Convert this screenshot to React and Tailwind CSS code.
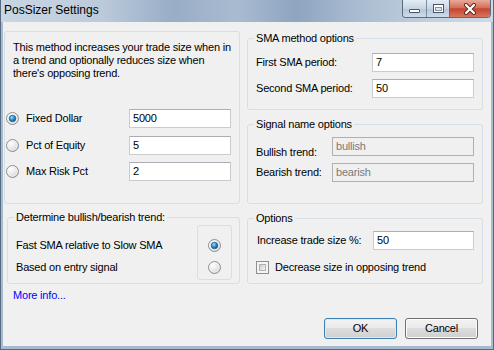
import React, { useId } from "react";

function Radio({ checked }) {
  const id = useId().replace(/:/g, "");
  return (
    <svg width="13" height="13" viewBox="0 0 13 13" className="shrink-0 block">
      <defs>
        <radialGradient id={`b${id}`} cx="0.35" cy="0.3" r="0.8">
          <stop offset="0" stopColor="#ffffff" />
          <stop offset="0.6" stopColor="#e6e6e6" />
          <stop offset="1" stopColor="#c4c4c4" />
        </radialGradient>
        <radialGradient id={`d${id}`} cx="0.4" cy="0.35" r="0.7">
          <stop offset="0" stopColor="#9fe0ff" />
          <stop offset="0.5" stopColor="#2a8fd0" />
          <stop offset="1" stopColor="#0b4f86" />
        </radialGradient>
      </defs>
      <circle cx="6.5" cy="6.5" r="6" fill={`url(#b${id})`} stroke="#8d8f93" strokeWidth="1" />
      <circle cx="6.5" cy="6.5" r="4.6" fill="none" stroke="#f4f4f4" strokeWidth="0.8" />
      {checked && <circle cx="6.5" cy="6.5" r="3.3" fill={`url(#d${id})`} stroke="#24507a" strokeWidth="0.6" />}
    </svg>
  );
}

function Check() {
  return (
    <div className="w-[13px] h-[13px] shrink-0 border border-[#8f8f8f] bg-[#f4f4f4] p-[2px]">
      <div className="w-full h-full border border-[#aeb1b6] bg-[linear-gradient(135deg,#cbcfd5,#f2f3f5)]"></div>
    </div>
  );
}

function Input({ value, w, disabled }) {
  return (
    <div
      className={
        "h-[19px] shrink-0 border pl-[3px] leading-[17px] " +
        (disabled
          ? "bg-[#f0f0f0] border-[#b0b0b0] text-[#7a7a7a]"
          : "bg-white border-[#c8cbd0] border-t-[#aaadb3] text-black")
      }
      style={{ width: w }}
    >
      {value}
    </div>
  );
}

function Group({ title, className, legendClass, children }) {
  return (
    <fieldset className={"border border-[#d5dfe5] rounded-[3px] shrink-0 " + className}>
      <legend className={"px-[2px] leading-[13px] " + legendClass}>{title}</legend>
      {children}
    </fieldset>
  );
}

export default function App() {
  return (
    <div className="w-[494px] h-[350px] flex flex-col overflow-hidden bg-[#a6bad0] border-x border-b border-[#56697f] font-['Liberation_Sans',Arial,sans-serif] text-[11px] text-black tracking-[-0.2px]">
      {/* title bar */}
      <div className="h-[22px] shrink-0 flex items-start bg-[linear-gradient(90deg,#c9d6e4_0%,#bccbdc_20%,#98adc6_35%,#a9bbd0_48%,#8ea5c0_60%,#a8bbd0_72%,#c3d1e0_88%,#cdd9e6_100%)]">
        <span className="ml-[3px] mt-[3px] text-[12px] leading-[15px] tracking-normal text-black">PosSizer Settings</span>
        <div className="ml-auto mr-[2px] flex h-[18px] border border-t-0 border-[#5b6b7e] rounded-b-[4px] overflow-hidden">
          <div className="w-[24px] flex items-end justify-center pb-[4px] bg-[linear-gradient(180deg,#e4ecf4,#c7d5e4_50%,#b3c5d8_51%,#cfdbe8)] border-r border-[#7d8da0]">
            <div className="w-[11px] h-[4px] bg-white border border-[#4a5563] rounded-[1px]"></div>
          </div>
          <div className="w-[23px] flex items-center justify-center bg-[linear-gradient(180deg,#e4ecf4,#c7d5e4_50%,#b3c5d8_51%,#cfdbe8)] border-r border-[#5b6b7e]">
            <div className="w-[11px] h-[9px] border border-[#4a5563] bg-white p-[1px] pt-[2px]">
              <div className="w-full h-full border border-[#8593a3] bg-[#dfe6ee]"></div>
            </div>
          </div>
          <div className="w-[40px] flex items-center justify-center bg-[linear-gradient(180deg,#e9a99b,#d66f5c_45%,#c4452f_52%,#d8765f)]">
            <svg width="14" height="12" viewBox="0 0 14 12">
              <path d="M3 2 L11 10 M11 2 L3 10" stroke="#5a2a22" strokeWidth="4" strokeLinecap="round" />
              <path d="M3 2 L11 10 M11 2 L3 10" stroke="#ffffff" strokeWidth="2.2" strokeLinecap="round" />
            </svg>
          </div>
        </div>
      </div>

      {/* client */}
      <div className="ml-[2px] mr-[2px] h-[324px] bg-[#f0f0f0] flex flex-col">
        {/* row 1 */}
        <div className="flex items-start">
          <div className="ml-[1px] mt-[9px] w-[236px] h-[173px] border border-[#d5dfe5] rounded-[3px] flex flex-col">
            <p className="pl-[8px] pt-[9px] leading-[13px] w-[226px]">
              This method increases your trade size when in a trend and optionally reduces size when there's opposing trend.
            </p>
            <div className="mt-[29px] flex items-center h-[19px]">
              <div className="ml-[1px]"><Radio checked /></div>
              <span className="ml-[7px]">Fixed Dollar</span>
              <div className="ml-auto mr-[8px]"><Input value="5000" w={102} /></div>
            </div>
            <div className="mt-[8px] flex items-center h-[19px]">
              <div className="ml-[1px]"><Radio /></div>
              <span className="ml-[7px]">Pct of Equity</span>
              <div className="ml-auto mr-[8px]"><Input value="5" w={102} /></div>
            </div>
            <div className="mt-[7px] flex items-center h-[19px]">
              <div className="ml-[1px]"><Radio /></div>
              <span className="ml-[7px]">Max Risk Pct</span>
              <div className="ml-auto mr-[8px]"><Input value="2" w={102} /></div>
            </div>
          </div>

          <div className="ml-[7px] mt-[10px] flex flex-col">
            <Group title="SMA method options" legendClass="-ml-[2px]" className="w-[236px] h-[78px] pl-[8px] pr-[8px] pt-[8px]">
              <div className="flex items-center justify-between h-[19px]">
                <span>First SMA period:</span>
                <Input value="7" w={102} />
              </div>
              <div className="mt-[7px] flex items-center justify-between h-[19px]">
                <span>Second SMA period:</span>
                <Input value="50" w={102} />
              </div>
            </Group>
            <Group title="Signal name options" legendClass="-ml-[2px]" className="mt-[8px] w-[236px] h-[86px] pl-[8px] pr-[8px] pt-[6px]">
              <div className="flex items-start justify-between h-[19px]">
                <span className="mt-[9px] leading-[13px]">Bullish trend:</span>
                <Input value="bullish" w={142} disabled />
              </div>
              <div className="mt-[7px] flex items-center justify-between h-[19px]">
                <span>Bearish trend:</span>
                <Input value="bearish" w={142} disabled />
              </div>
            </Group>
          </div>
        </div>

        {/* row 2 */}
        <div className="flex items-start">
          <Group title="Determine bullish/bearish trend:" legendClass="-ml-[2px]" className="ml-[4px] mt-[7px] w-[233px] h-[73px] pl-[8px] pr-[7px] flex">
            <div className="flex w-full">
              <div className="flex-1 pt-[15px] flex flex-col gap-[9px] leading-[13px]">
                <span>Fast SMA relative to Slow SMA</span>
                <span>Based on entry signal</span>
              </div>
              <div className="mt-[1px] w-[35px] h-[55px] border border-[#d5dfe5] rounded-[3px] flex flex-col items-center pt-[13px] gap-[9px]">
                <Radio checked />
                <Radio />
              </div>
            </div>
          </Group>
          <Group title="Options" legendClass="-ml-[2px]" className="ml-[7px] mt-[8px] w-[236px] h-[72px] pl-[8px] pr-[8px] pt-[6px]">
            <div className="flex items-center justify-between h-[19px] pl-[1px]">
              <span>Increase trade size %:</span>
              <Input value="50" w={101} />
            </div>
            <div className="mt-[11px] flex items-center">
              <Check />
              <span className="ml-[6px] leading-[13px]">Decrease size in opposing trend</span>
            </div>
          </Group>
        </div>

        <div className="ml-[10px] mt-[5px] leading-[13px] text-[#0000ff]">More info...</div>

        <div className="mt-[16px] flex justify-end gap-[8px] pr-[13px]">
          <div className="w-[73px] h-[21px] rounded-[3px] border border-[#3c7fb1] bg-[linear-gradient(180deg,#f2f2f2_0%,#ebebeb_45%,#dddddd_50%,#cfcfcf_100%)] shadow-[inset_0_0_0_1px_#d4ecfb] flex items-center justify-center leading-[13px]">
            OK
          </div>
          <div className="w-[73px] h-[21px] rounded-[3px] border border-[#707070] bg-[linear-gradient(180deg,#f2f2f2_0%,#ebebeb_45%,#dddddd_50%,#cfcfcf_100%)] shadow-[inset_0_0_0_1px_#fcfcfc] flex items-center justify-center leading-[13px]">
            Cancel
          </div>
        </div>
      </div>
    </div>
  );
}
